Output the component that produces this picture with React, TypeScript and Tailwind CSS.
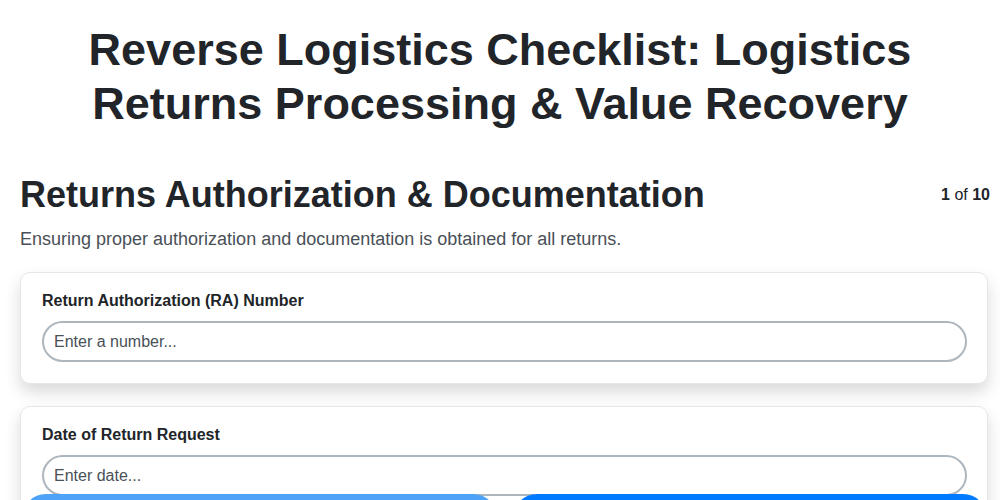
export default function App() {
  const fields = [
    { label: "Return Authorization (RA) Number", placeholder: "Enter a number..." },
    { label: "Date of Return Request", placeholder: "Enter date..." },
    { label: "Customer Name", placeholder: "Enter text..." },
  ];

  return (
    <div className="min-h-screen bg-white text-[#212529]" style={{ fontFamily: '"Liberation Sans", Arial, sans-serif' }}>
      <h1 className="pt-[23px] text-center text-[45px] font-bold leading-[1.2] px-16">
        Reverse Logistics Checklist: Logistics Returns Processing &amp; Value Recovery
      </h1>

      <div className="ml-5 mr-[10px] mt-[42px]">
        {/* section header */}
        <div className="flex items-center justify-between">
          <h2 className="text-[36px] font-bold leading-[1.2]">Returns Authorization &amp; Documentation</h2>
          <p className="text-base">
            <span className="font-bold">1</span> of <span className="font-bold">10</span>
          </p>
        </div>
        <p className="mt-[9px] text-lg text-[#495057]">
          Ensuring proper authorization and documentation is obtained for all returns.
        </p>

        <div className="mt-[19px] mr-[2px] flex flex-col gap-[22px] pb-32">
          {fields.map((f, i) => (
            <div
              key={i}
              className="rounded-[10px] border border-[#e5e7eb] bg-white pl-[21px] pr-5 pt-4 pb-[21px] shadow-[0_8px_16px_rgba(0,0,0,0.15)]"
            >
              <label className="block text-base leading-6 font-bold text-[#212529] mb-2">{f.label}</label>
              <input
                className="block w-full h-[41px] rounded-full border-2 border-[#adb5bd] px-[10px] text-base text-[#495057] placeholder:text-[#495057] outline-none"
                placeholder={f.placeholder}
              />
            </div>
          ))}
        </div>
      </div>

      {/* navigation bar */}
      <div className="fixed left-0 right-0 top-[494px] flex gap-4 pl-[22px] pr-[13px]">
        <button aria-label="Previous" className="flex-1 h-12 rounded-full bg-[#4da3f7]" />
        <button aria-label="Next" className="flex-1 h-12 rounded-full bg-[#007bff]" />
      </div>
    </div>
  );
}
